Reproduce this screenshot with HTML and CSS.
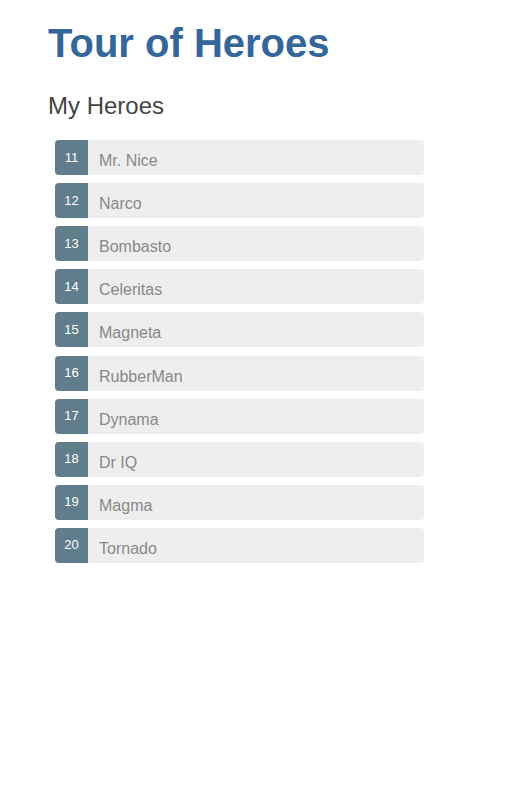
FILE: index.html
```html
<!DOCTYPE html>
<html lang="en">
<head>
<meta charset="utf-8">
<title>Tour of Heroes</title>
<link rel="stylesheet" href="styles.css">
</head>
<body>
<div class="page">
  <h1 class="title">Tour of Heroes</h1>
  <h2 class="subtitle">My Heroes</h2>
  <ul class="heroes">
    <li class="hero"><span class="badge">11</span><span class="name">Mr. Nice</span></li>
    <li class="hero"><span class="badge">12</span><span class="name">Narco</span></li>
    <li class="hero"><span class="badge">13</span><span class="name">Bombasto</span></li>
    <li class="hero"><span class="badge">14</span><span class="name">Celeritas</span></li>
    <li class="hero"><span class="badge">15</span><span class="name">Magneta</span></li>
    <li class="hero"><span class="badge">16</span><span class="name">RubberMan</span></li>
    <li class="hero"><span class="badge">17</span><span class="name">Dynama</span></li>
    <li class="hero"><span class="badge">18</span><span class="name">Dr IQ</span></li>
    <li class="hero"><span class="badge">19</span><span class="name">Magma</span></li>
    <li class="hero"><span class="badge">20</span><span class="name">Tornado</span></li>
  </ul>
</div>
</body>
</html>
```
FILE: styles.css
```css
html, body {
  margin: 0;
  padding: 0;
  background: #fff;
}
body {
  font-family: "Liberation Sans", Arial, sans-serif;
}
.page {
  padding: 21px 0 0 48px;
}
.title {
  margin: 0;
  color: #336699;
  font-size: 40px;
  font-weight: bold;
}
.subtitle {
  margin: 25.5px 0 0;
  color: #444;
  font-size: 24px;
  font-weight: normal;
}
.heroes {
  list-style: none;
  margin: 20.7px 0 0;
  padding: 0;
  width: 384px;
}
.hero {
  display: flex;
  height: 35px;
  margin: 8.07px 8px 8.07px 7px;
  background: #eeeeee;
  border-radius: 4px;
  font-size: 16px;
}
.hero:first-child {
  margin-top: 0;
}
.badge {
  box-sizing: border-box;
  width: 33px;
  text-align: center;
  font-size: 13px;
  line-height: 13px;
  padding: 10.6px 0 0;
  color: #fff;
  background: #607d8b;
  border-radius: 4px 0 0 4px;
  margin-right: 11px;
}
.name {
  padding-top: 12px;
  line-height: 18px;
  color: #888;
}
```
